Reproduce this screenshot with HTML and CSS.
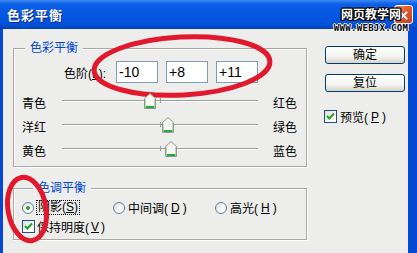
FILE: index.html
```html
<!doctype html>
<html>
  <head>
    <meta charset="utf-8">
    <link rel="stylesheet" href="styles.css">
  </head>

  <body>
    <div class="window">
      <div class="titlebar">
        <span class="title">色彩平衡</span>
        <span class="close">
          <svg width="19" height="19" viewBox="0 0 19 19">
            <path d="M6 6 L13 13 M13 6 L6 13" stroke="#fff" stroke-width="2.2" stroke-linecap="round" />
          </svg>
        </span>
      </div>

      <div class="client">
        <div class="main">
          <fieldset class="group balance">
            <legend>色彩平衡</legend>
            <div class="levels">
              <label>色阶(<u>L</u>):</label>
              <input type="text" value="-10">
              <input type="text" value="+8">
              <input type="text" value="+11">
            </div>
            <div class="sliders">
              <div class="slider">
                <span class="name">青色</span>
                <div class="track">
                  <svg class="thumb" style="left: 82px" width="12" height="16" viewBox="0 0 12 16">
                    <path d="M0.5 5.5 L6 0.5 L11.5 5.5 V15.5 H0.5 Z" fill="#f7f7f3" stroke="#8b9a8b" />
                    <path d="M1.5 14 H10.5" stroke="#2fa83a" stroke-width="2" />
                    <path d="M10.5 6 V13 M1.5 6 V13" stroke="#b5dcb5" stroke-width="1" />
                  </svg>
                </div>
                <span class="name-right">红色</span>
              </div>
              <div class="slider">
                <span class="name">洋红</span>
                <div class="track">
                  <svg class="thumb" style="left: 100px" width="12" height="16" viewBox="0 0 12 16">
                    <path d="M0.5 5.5 L6 0.5 L11.5 5.5 V15.5 H0.5 Z" fill="#f7f7f3" stroke="#8b9a8b" />
                    <path d="M1.5 14 H10.5" stroke="#2fa83a" stroke-width="2" />
                    <path d="M10.5 6 V13 M1.5 6 V13" stroke="#b5dcb5" stroke-width="1" />
                  </svg>
                </div>
                <span class="name-right">绿色</span>
              </div>
              <div class="slider">
                <span class="name">黄色</span>
                <div class="track">
                  <svg class="thumb" style="left: 103px" width="12" height="16" viewBox="0 0 12 16">
                    <path d="M0.5 5.5 L6 0.5 L11.5 5.5 V15.5 H0.5 Z" fill="#f7f7f3" stroke="#8b9a8b" />
                    <path d="M1.5 14 H10.5" stroke="#2fa83a" stroke-width="2" />
                    <path d="M10.5 6 V13 M1.5 6 V13" stroke="#b5dcb5" stroke-width="1" />
                  </svg>
                </div>
                <span class="name-right">蓝色</span>
              </div>
            </div>
          </fieldset>

          <fieldset class="group tone">
            <legend>色调平衡</legend>
            <div class="radios">
              <label class="opt"><span class="radio on"></span><span class="focus">阴影(<u>S</u>)</span></label>
              <label class="opt"><span class="radio"></span>中间调(<u>D</u>)</label>
              <label class="opt"><span class="radio"></span>高光(<u>H</u>)</label>
            </div>
            <label class="check">
              <span class="box">
                <svg width="11" height="11" viewBox="0 0 11 11">
                  <path d="M2 5 L4.3 7.5 L9 2.5" stroke="#21a121" stroke-width="2" fill="none" />
                </svg>
              </span>
              保持明度(<u>V</u>)
            </label>
          </fieldset>
        </div>

        <div class="side">
          <button>确定</button>
          <button>复位</button>
          <label class="check preview">
            <span class="box">
              <svg width="11" height="11" viewBox="0 0 11 11">
                <path d="M2 5 L4.3 7.5 L9 2.5" stroke="#21a121" stroke-width="2" fill="none" />
              </svg>
            </span>
            预览(<u>P</u>)
          </label>
        </div>
      </div>

      <!-- site watermark pasted over the title bar -->
      <div class="watermark">
        <div class="wm-name">网页教学网</div>
        <div class="wm-url">WWW.WEBJX.COM</div>
      </div>

      <!-- red hand-drawn marks -->
      <svg class="marks" width="417" height="253" viewBox="0 0 417 253">
        <ellipse cx="182" cy="66" rx="88" ry="29" transform="rotate(-3 182 66)" fill="none" stroke="#e2192c" stroke-width="5" />
        <ellipse cx="27" cy="209" rx="19" ry="32" transform="rotate(-10 27 209)" fill="none" stroke="#e2192c" stroke-width="5" />
      </svg>
    </div>
  </body>
</html>
```

FILE: styles.css
```css
/* Reset */
*,
*::before,
*::after {
  box-sizing: border-box;
  margin: 0;
  padding: 0;
}

body {
  font-family: "Liberation Sans", "Noto Sans CJK SC", sans-serif;
  font-size: 12px;
  color: #000;
  background-color: #ededeb;
  width: 417px;
  height: 253px;
  overflow: hidden;
}

.window {
  position: relative;
  width: 417px;
  height: 253px;
  display: flex;
  flex-direction: column;
}

/* Title bar */
.titlebar {
  height: 29px;
  display: flex;
  align-items: center;
  justify-content: space-between;
  padding: 0 4px 0 7px;
  background: linear-gradient(#3d8bf5 0, #0d5fe6 4px, #0558e2 45%, #0251d8 85%, #0240b8 100%);
}

.title {
  color: #fff;
  font-weight: bold;
  font-size: 13px;
  letter-spacing: 1px;
  text-shadow: 1px 1px 0 #0a2a8c;
}

.close {
  width: 19px;
  height: 19px;
  border: 1px solid #fff;
  border-radius: 3px;
  background: linear-gradient(135deg, #f0906a 0%, #e0582c 50%, #c8401c 100%);
  display: flex;
}

/* Client area */
.client {
  flex: 1;
  display: flex;
  border-left: 3px solid #0648d4;
  border-right: 9px solid #0648d4;
  background-color: #ededeb;
}

.main {
  width: 294px;
  margin-left: 10px;
  margin-top: 12px;
}

.side {
  width: 80px;
  margin-left: 18px;
  padding-top: 17px;
  display: flex;
  flex-direction: column;
}

/* Group boxes */
.group {
  border: 1px solid #a8a8a2;
  box-shadow: inset 1px 1px #fff, 1px 1px #fff;
  min-width: 0;
}

.group legend {
  margin-left: 11px;
  padding: 0 5px;
  line-height: 14px;
  color: #0046d5;
  background-color: #ededeb;
}

.balance {
  padding: 6px 0 4px;
}

.tone {
  margin-top: 14px;
  padding: 4px 0 4px 8px;
}

/* Levels row */
.levels {
  display: flex;
  align-items: center;
  height: 22px;
  padding-left: 48px;
}

.levels label {
  width: 44px;
  text-align: right;
  white-space: nowrap;
}

.levels input {
  width: 42px;
  height: 22px;
  margin-left: 8px;
  padding: 0 2px;
  border: 1px solid #7f9db9;
  background: #fff;
  font: 14px "Liberation Sans", Arial, sans-serif;
  color: #000;
}

.levels label + input {
  margin-left: 10px;
}

/* Sliders */
.sliders {
  margin-top: 7px;
}

.slider {
  display: flex;
  align-items: center;
  height: 24px;
  padding-left: 8px;
}

.slider .name {
  width: 40px;
}

.slider .name-right {
  margin-left: 15px;
}

.track {
  position: relative;
  width: 196px;
  height: 24px;
}

.track::before {
  content: "";
  position: absolute;
  left: 0;
  right: 0;
  top: 10px;
  height: 2px;
  border-top: 1px solid #9c9c98;
  border-bottom: 1px solid #fff;
  border-radius: 1px;
}

.track::after {
  content: "";
  position: absolute;
  left: 98px;
  top: 8px;
  width: 1px;
  height: 5px;
  background-color: #9c9c98;
}

.thumb {
  position: absolute;
  top: 3px;
  z-index: 1;
}

/* Radios and checkboxes */
.radios {
  display: grid;
  grid-template-columns: 91px 102px auto;
  height: 17px;
  align-items: center;
}

.opt {
  display: flex;
  align-items: center;
  gap: 3px;
  white-space: nowrap;
}

.radio {
  width: 12px;
  height: 12px;
  border: 1px solid #5a7ca6;
  border-radius: 50%;
  background: linear-gradient(135deg, #dcdcd4, #fff 70%);
  display: flex;
  align-items: center;
  justify-content: center;
}

.radio.on::after {
  content: "";
  width: 4px;
  height: 4px;
  border-radius: 50%;
  background-color: #21a121;
}

.focus {
  border: 1px dotted #000;
  padding: 0 1px;
  margin-left: -1px;
  line-height: 13px;
}

.check {
  display: flex;
  align-items: center;
  gap: 2px;
  height: 17px;
  margin-top: 2px;
  white-space: nowrap;
}

.box {
  width: 13px;
  height: 13px;
  border: 1px solid #1c5180;
  background: linear-gradient(135deg, #dcdcd4, #fff 70%);
  display: flex;
}

/* Buttons */
button {
  width: 80px;
  height: 18px;
  margin-bottom: 10px;
  border: 1px solid #003c74;
  border-radius: 3px;
  background: linear-gradient(#fff 0, #f3f3ef 60%, #d8d4c8 100%);
  font-family: "Liberation Sans", "Noto Sans CJK SC", sans-serif;
  font-size: 12px;
  line-height: 14px;
  color: #000;
}

.preview {
  margin-top: 6px;
  margin-left: -1px;
  gap: 3px;
}

/* Watermark and marks on top */
.watermark {
  position: absolute;
  left: 333px;
  top: 7px;
  width: 76px;
  text-align: center;
}

.wm-name {
  font-size: 12px;
  font-weight: bold;
  line-height: 16px;
  color: #fff;
  text-shadow: 1px 0 #000, -1px 0 #000, 0 1px #000, 0 -1px #000, 1px 1px #000, -1px -1px #000, 1px -1px #000, -1px 1px #000;
}

.wm-url {
  font: bold 9px "DejaVu Sans Mono", monospace;
  line-height: 10px;
  letter-spacing: 0.3px;
  color: #000;
  text-shadow: 1px 0 #fff, -1px 0 #fff, 0 1px #fff, 0 -1px #fff;
}

.marks {
  position: absolute;
  left: 0;
  top: 0;
  pointer-events: none;
}
```
